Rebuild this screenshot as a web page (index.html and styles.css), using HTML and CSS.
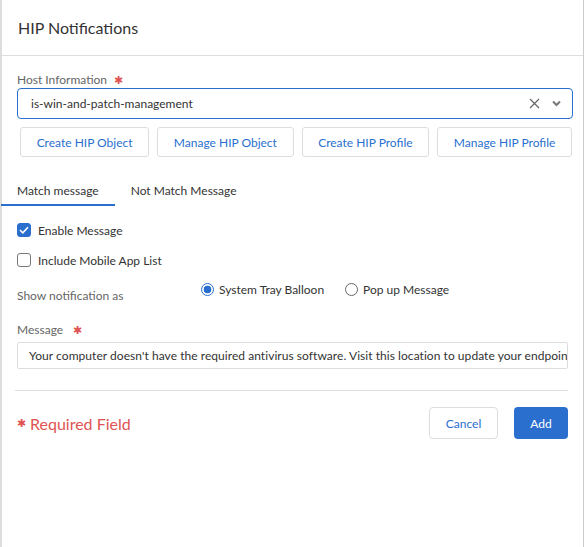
FILE: index.html
```html
<!DOCTYPE html>
<html lang="en">
<head>
  <meta charset="UTF-8">
  <title>HIP Notifications</title>
  <link rel="stylesheet" href="styles.css">
</head>
<body>
  <div class="modal">
    <div class="modal-header">HIP Notifications</div>
    <div class="modal-body">
      <div class="field-label">Host Information <span class="req">&#10033;</span></div>
      <div class="select">
        <span class="select-value">is-win-and-patch-management</span>
        <svg class="icon-clear" width="11" height="11" viewBox="0 0 11 11"><path d="M1 1L10 10M10 1L1 10" stroke="#666" stroke-width="1.2" fill="none"/></svg>
        <svg class="icon-caret" width="9" height="7" viewBox="0 0 9 7"><path d="M1 1.5L4.5 5L8 1.5" stroke="#777" stroke-width="2" fill="none"/></svg>
      </div>
      <div class="action-row">
        <button class="btn-outline">Create HIP Object</button>
        <button class="btn-outline">Manage HIP Object</button>
        <button class="btn-outline">Create HIP Profile</button>
        <button class="btn-outline">Manage HIP Profile</button>
      </div>

      <div class="tabs">
        <div class="tab active">Match message</div>
        <div class="tab">Not Match Message</div>
      </div>

      <label class="check-row">
        <span class="checkbox checked">
          <svg width="10" height="8" viewBox="0 0 10 8"><path d="M1 4L3.8 6.8L9 1.2" stroke="#fff" stroke-width="1.6" fill="none"/></svg>
        </span>
        Enable Message
      </label>
      <label class="check-row">
        <span class="checkbox"></span>
        Include Mobile App List
      </label>

      <div class="notify-row">
        <span class="notify-label">Show notification as</span>
        <span class="radio-group">
          <label class="radio-item"><span class="radio checked"></span>System Tray Balloon</label>
          <label class="radio-item"><span class="radio"></span>Pop up Message</label>
        </span>
      </div>

      <div class="field-label msg-label">Message <span class="req">&#10033;</span></div>
      <div class="text-input">Your computer doesn't have the required antivirus software. Visit this location to update your endpoint</div>

      <div class="divider"></div>

      <div class="footer">
        <span class="req-note"><span class="req-star">&#10033;</span>Required Field</span>
        <span class="footer-buttons">
          <button class="btn-cancel">Cancel</button>
          <button class="btn-primary">Add</button>
        </span>
      </div>
    </div>
  </div>
</body>
</html>
```
FILE: styles.css
```css
body { margin: 0; background: #fff; font-family: Lato, "Open Sans", sans-serif; color: #333; }
.modal { width: 584px; height: 547px; box-sizing: border-box; border-left: 2px solid #ddd; border-right: 1px solid #ccc; background: #fff; }
.modal-header { height: 56px; box-sizing: border-box; padding: 0 16px 1px 16px; display: flex; align-items: center; font-size: 16px; color: #333; border-bottom: 1px solid #ddd; }
.modal-body { padding: 15px 0 0 15px; }
.field-label { font-size: 12px; color: #666; height: 17px; line-height: 17px; }
.req { color: #e05353; font-size: 11px; margin-left: 4px; }
.select { margin-top: 0; width: 556px; height: 31px; box-sizing: border-box; border: 1px solid #2a6fce; border-radius: 4px; display: flex; align-items: center; padding: 0 11px 0 13px; font-size: 12px; }
.select-value { flex: 1; }
.icon-clear { margin-right: 12px; }
.action-row { display: flex; gap: 8px; width: 552px; padding: 8px 0 0 3px; }
.btn-outline { flex: 1 1 auto; height: 30px; background: #fff; border: 1px solid #ddd; border-radius: 3px; color: #2a6fce; font-family: inherit; font-size: 12px; padding: 0; }
.tabs { display: flex; margin: 20px 0 0 -16px; }
.tab { font-size: 12px; line-height: 15px; color: #333; padding: 6px 16px 6px 16px; border-bottom: 2px solid transparent; }
.tab.active { border-bottom-color: #2a6fce; }
.check-row { display: flex; align-items: center; gap: 7px; font-size: 12px; height: 16px; margin-top: 16px; }
.check-row + .check-row { margin-top: 14px; }
.checkbox { width: 14px; height: 14px; box-sizing: border-box; border: 1px solid #777; border-radius: 3px; display: flex; align-items: center; justify-content: center; }
.checkbox.checked { background: #2a6fce; border-color: #2a6fce; }
.notify-row { display: flex; margin-top: 13px; font-size: 12px; }
.notify-label { width: 184px; color: #666; line-height: 15px; padding-top: 7px; }
.radio-group { display: flex; gap: 21px; }
.radio-item { display: flex; align-items: center; gap: 5px; height: 16px; }
.radio { width: 13px; height: 13px; box-sizing: border-box; border: 1px solid #666; border-radius: 50%; background: #fff; }
.radio.checked { border-color: #2a6fce; background: radial-gradient(circle, #2a6fce 0 3.6px, #fff 4.2px); }
.msg-label { margin-top: 18px; }
.msg-label .req { margin-left: 7px; }
.text-input { margin-top: 4px; height: 27px; width: 551px; box-sizing: border-box; border: 1px solid #ddd; border-radius: 2px; font-size: 12px; letter-spacing: 0.05px; line-height: 25px; padding: 0 10px 0 11px; white-space: nowrap; overflow: hidden; }
.divider { margin-top: 21px; width: 553px; margin-left: -2px; border-top: 1px solid #ddd; }
.footer { display: flex; align-items: center; justify-content: space-between; width: 551px; margin-top: 16px; }
.req-note { color: #e05353; font-size: 16px; display: flex; align-items: center; }
.req-star { font-size: 11px; margin-right: 4px; }
.footer-buttons { display: flex; gap: 16px; }
.btn-cancel { width: 69px; height: 32px; background: #fff; border: 1px solid #ddd; border-radius: 4px; color: #2a6fce; font-family: inherit; font-size: 12px; }
.btn-primary { width: 54px; height: 32px; background: #2a6fce; border: none; border-radius: 4px; color: #fff; font-family: inherit; font-size: 12px; }
```
